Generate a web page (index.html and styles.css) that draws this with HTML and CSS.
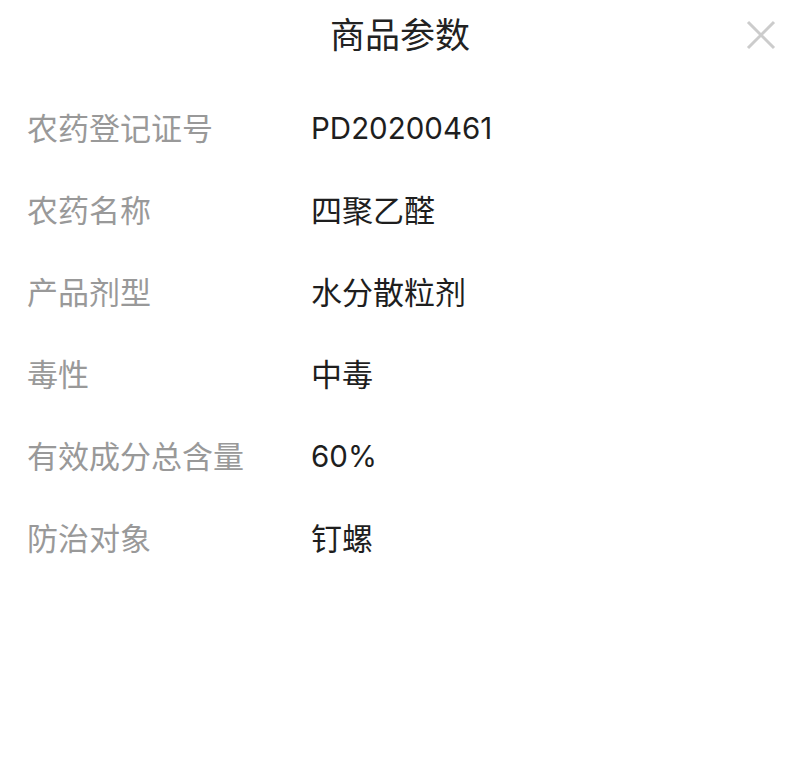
FILE: index.html
```html
<!DOCTYPE html>
<html lang="zh">
<head>
<meta charset="utf-8">
<link rel="stylesheet" href="styles.css">
</head>
<body>
<div class="sheet">
  <header class="header">
    <h1 class="title">商品参数</h1>
    <button class="close" aria-label="关闭">
      <svg width="30" height="30" viewBox="0 0 30 30"><path d="M2 2 L28 28 M28 2 L2 28" stroke="#cccccc" stroke-width="3" fill="none"/></svg>
    </button>
  </header>
  <div class="list">
    <div class="row"><span class="label">农药登记证号</span><span class="value num">PD20200461</span></div>
    <div class="row"><span class="label">农药名称</span><span class="value">四聚乙醛</span></div>
    <div class="row"><span class="label">产品剂型</span><span class="value">水分散粒剂</span></div>
    <div class="row"><span class="label">毒性</span><span class="value">中毒</span></div>
    <div class="row"><span class="label">有效成分总含量</span><span class="value num">60%</span></div>
    <div class="row"><span class="label">防治对象</span><span class="value">钉螺</span></div>
  </div>
</div>
</body>
</html>
```
FILE: styles.css
```css
* { box-sizing: border-box; }
html, body { margin: 0; padding: 0; background: #fff; }
body { font-family: "Noto Sans CJK SC", "Noto Sans", sans-serif; width: 800px; height: 775px; overflow: hidden; }
.sheet { width: 800px; }
.header { position: relative; height: 66px; display: flex; align-items: center; justify-content: center; }
.title { margin: 0; font-size: 35px; font-weight: 400; color: #222; line-height: 66px; }
.close { position: absolute; right: 24px; top: 20px; width: 30px; height: 30px; padding: 0; border: 0; background: none; display: flex; }
.list { padding: 19px 0 0 27px; }
.row { display: flex; height: 82px; align-items: center; font-size: 31px; }
.label { width: 284px; color: #999; }
.value { color: #1e1e1e; }
.num { font-family: "Inter", "Noto Sans CJK SC", sans-serif; font-size: 29.5px; position: relative; top: 2px; }
```
